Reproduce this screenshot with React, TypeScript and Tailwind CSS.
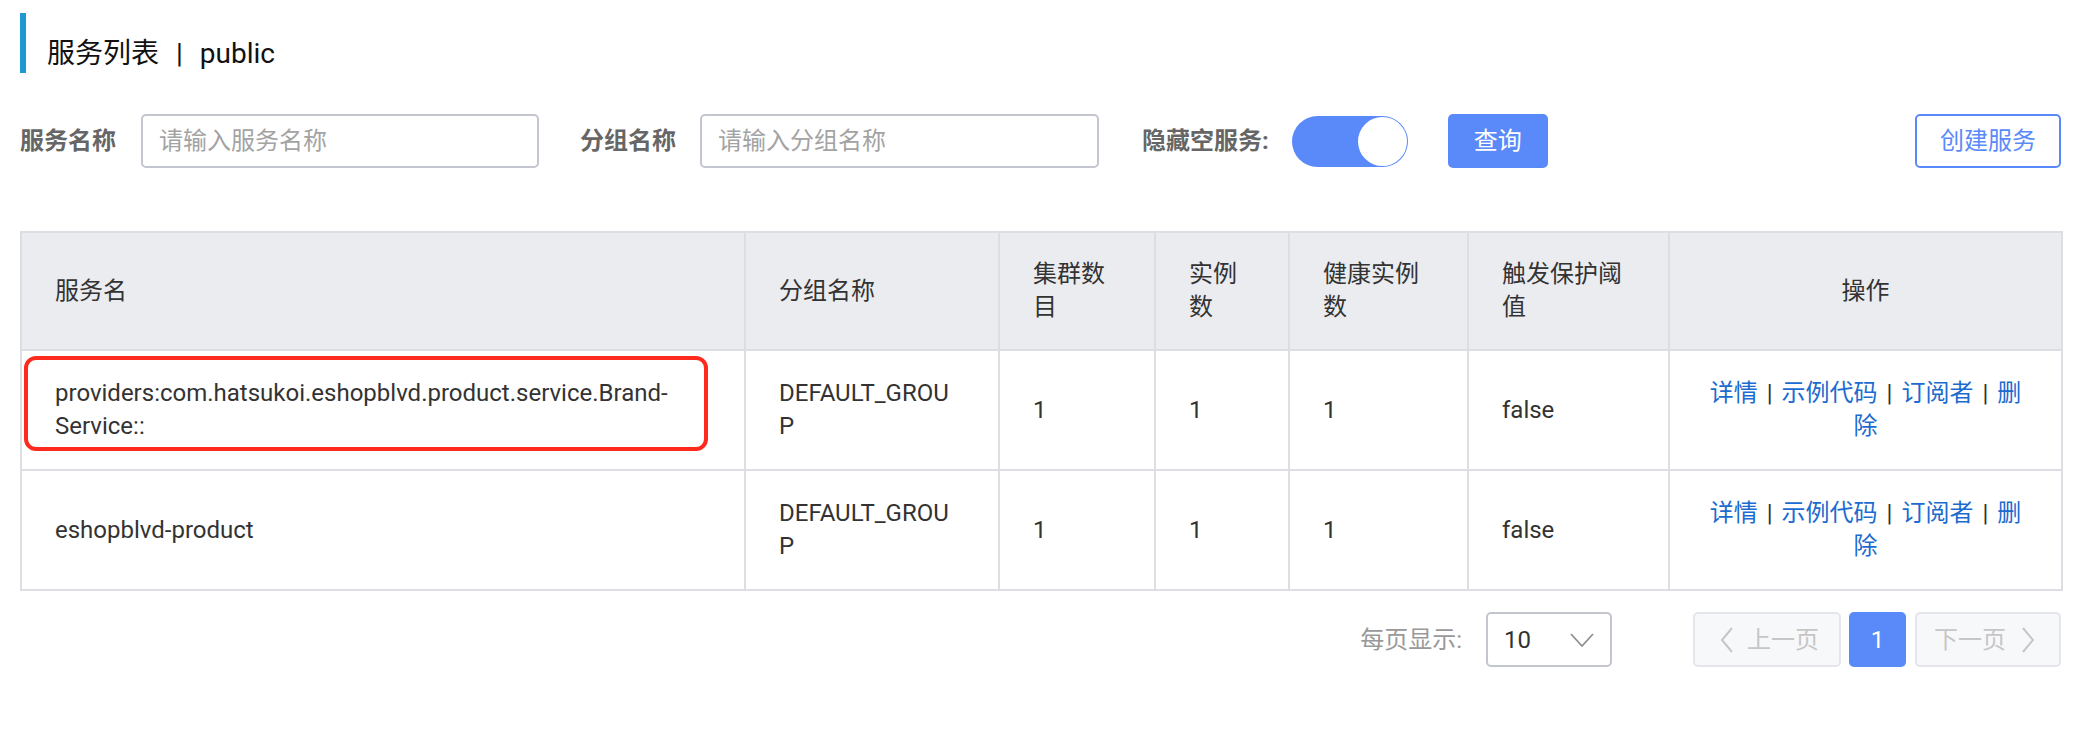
import { Fragment } from 'react'

const columns = [
  { key: 'name', label: '服务名', width: 'w-[724px]' },
  { key: 'group', label: '分组名称', width: 'w-[254px]' },
  { key: 'clusters', label: '集群数目', width: 'w-[156px]' },
  { key: 'instances', label: '实例数', width: 'w-[134px]' },
  { key: 'healthy', label: '健康实例数', width: 'w-[179px]' },
  { key: 'threshold', label: '触发保护阈值', width: 'w-[201px]' },
  { key: 'ops', label: '操作', width: 'w-[393px]' },
]

const services = [
  {
    name: 'providers:com.hatsukoi.eshopblvd.product.service.Brand-Service::',
    group: 'DEFAULT_GROUP',
    clusters: 1,
    instances: 1,
    healthy: 1,
    threshold: 'false',
    marked: true,
  },
  {
    name: 'eshopblvd-product',
    group: 'DEFAULT_GROUP',
    clusters: 1,
    instances: 1,
    healthy: 1,
    threshold: 'false',
    marked: false,
  },
]

const actions = ['详情', '示例代码', '订阅者', '删除']

function ChevronLeft() {
  return (
    <svg width="14" height="26" viewBox="0 0 14 26" fill="none" stroke="currentColor" strokeWidth="2">
      <polyline points="12,1 2,13 12,25" />
    </svg>
  )
}

function ChevronRight() {
  return (
    <svg width="14" height="26" viewBox="0 0 14 26" fill="none" stroke="currentColor" strokeWidth="2">
      <polyline points="2,1 12,13 2,25" />
    </svg>
  )
}

export default function App() {
  return (
    <div className="min-h-[752px] w-[2074px] bg-white pl-[20px] pr-[13px] pt-[13px] font-['Roboto','Noto_Sans_CJK_SC',sans-serif] text-[#333]">
      {/* title */}
      <div className="h-[60px] border-l-[6px] border-[#1e9ad0] pl-[21px] pt-[27px] text-[28px] leading-[28px] text-[#111]">
        服务列表<span className="mx-[17px]">|</span>public
      </div>

      {/* filters */}
      <div className="mt-[41px] flex h-[54px] items-center text-[24px]">
        <span className="mr-[25px] font-bold text-[#666]">服务名称</span>
        <input
          placeholder="请输入服务名称"
          className="h-[54px] w-[398px] rounded-[5px] border-2 border-[#c4c6cf] px-[16px] text-[24px] outline-none placeholder:text-[#a3a3a3]"
        />
        <span className="ml-[41px] mr-[24px] font-bold text-[#666]">分组名称</span>
        <input
          placeholder="请输入分组名称"
          className="h-[54px] w-[399px] rounded-[5px] border-2 border-[#c4c6cf] px-[16px] text-[24px] outline-none placeholder:text-[#a3a3a3]"
        />
        <span className="ml-[43px] mr-[23px] font-bold text-[#666]">隐藏空服务:</span>
        <div className="flex h-[51px] w-[116px] items-center justify-end rounded-full bg-[#5a8afa] p-[1px]">
          <div className="h-[49px] w-[49px] rounded-full bg-white" />
        </div>
        <button type="button" className="ml-[40px] h-[54px] w-[100px] rounded-[5px] bg-[#5a8afa] text-[24px] text-white">
          查询
        </button>
        <button type="button" className="ml-auto h-[54px] w-[146px] rounded-[5px] border-2 border-[#5a8afa] bg-white text-[24px] text-[#5a8afa]">
          创建服务
        </button>
      </div>

      {/* table */}
      <table className="mt-[63px] w-full table-fixed border-collapse border-2 border-[#dcdee3] text-[24px] leading-[33px]">
        <colgroup>
          {columns.map((c) => (
            <col key={c.key} className={c.width} />
          ))}
        </colgroup>
        <thead>
          <tr className="bg-[#ebecf0]">
            {columns.map((c) => (
              <th
                key={c.key}
                className={`border-2 border-[#dcdee3] px-[33px] py-[25px] align-middle font-normal ${c.key === 'ops' ? 'text-center' : 'text-left'}`}
              >
                <span>{c.label}</span>
              </th>
            ))}
          </tr>
        </thead>
        <tbody>
          {services.map((s) => (
            <tr key={s.name}>
              <td className="relative border-2 border-[#dcdee3] px-[33px] py-[26px] align-middle">
                <span>{s.name}</span>
                {s.marked && (
                  <div className="pointer-events-none absolute bottom-[18px] left-[2px] right-[36px] top-[5px] rounded-[12px] border-[4px] border-[#fe2a1e]" />
                )}
              </td>
              <td className="border-2 border-[#dcdee3] px-[33px] py-[26px] align-middle">
                <div className="max-w-[176px] break-all">{s.group}</div>
              </td>
              <td className="border-2 border-[#dcdee3] px-[33px] py-[26px] align-middle">
                <span>{s.clusters}</span>
              </td>
              <td className="border-2 border-[#dcdee3] px-[33px] py-[26px] align-middle">
                <span>{s.instances}</span>
              </td>
              <td className="border-2 border-[#dcdee3] px-[33px] py-[26px] align-middle">
                <span>{s.healthy}</span>
              </td>
              <td className="border-2 border-[#dcdee3] px-[33px] py-[26px] align-middle">
                <span>{s.threshold}</span>
              </td>
              <td className="border-2 border-[#dcdee3] px-[33px] py-[26px] text-center align-middle">
                {actions.map((a, i) => (
                  <Fragment key={a}>
                    {i > 0 && <span className="mx-[9px] text-[#333]">|</span>}
                    <a href="#" className="text-[#1b6bd0]">{a}</a>
                  </Fragment>
                ))}
              </td>
            </tr>
          ))}
        </tbody>
      </table>

      {/* pagination */}
      <div className="mt-[21px] flex h-[55px] items-center justify-end text-[24px]">
        <span className="mr-[24px] text-[#999]">每页显示:</span>
        <div className="flex h-[55px] w-[126px] items-center justify-between rounded-[5px] border-2 border-[#c4c6cf] pl-[16px] pr-[16px]">
          <span className="text-[#333]">10</span>
          <svg width="24" height="14" viewBox="0 0 24 14" fill="none" stroke="#8f8f8f" strokeWidth="1.8">
            <polyline points="1,1 12,13 23,1" />
          </svg>
        </div>
        <button type="button" className="ml-[81px] flex h-[55px] w-[148px] items-center gap-[13px] rounded-[5px] border-2 border-[#e4e6eb] bg-[#f7f8fa] pl-[25px] text-[#c6c6c6]">
          <ChevronLeft />
          <span>上一页</span>
        </button>
        <button type="button" className="ml-[8px] h-[55px] w-[57px] rounded-[5px] bg-[#5a8afa] text-white">
          1
        </button>
        <button type="button" className="ml-[9px] flex h-[55px] w-[146px] items-center justify-end gap-[15px] rounded-[5px] border-2 border-[#e4e6eb] bg-[#f7f8fa] pr-[24px] text-[#c6c6c6]">
          <span>下一页</span>
          <ChevronRight />
        </button>
      </div>
    </div>
  )
}
